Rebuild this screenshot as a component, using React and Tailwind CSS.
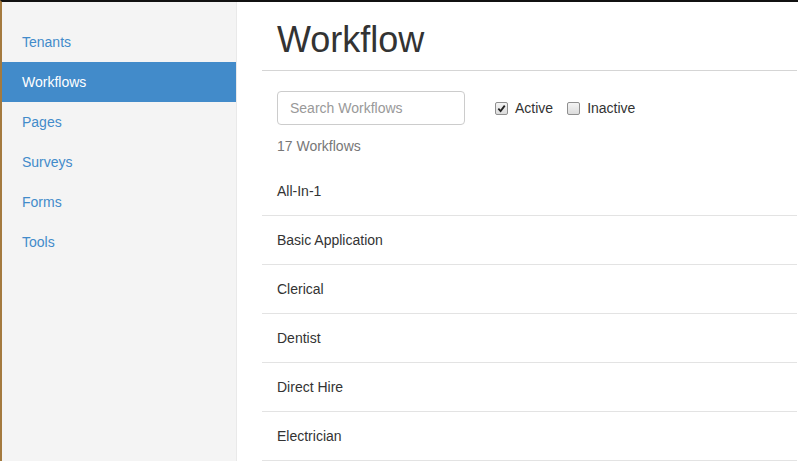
import { useState } from "react";

const navItems = ["Tenants", "Workflows", "Pages", "Surveys", "Forms", "Tools"];

const workflows = [
  "All-In-1",
  "Basic Application",
  "Clerical",
  "Dentist",
  "Direct Hire",
  "Electrician",
];

function Check({ checked, label }) {
  return (
    <label className="flex items-center gap-[7px] text-[14px] text-[#333]">
      <span className="flex h-[13px] w-[13px] items-center justify-center rounded-[2px] border border-[#8f8f8f] bg-gradient-to-b from-[#f4f4f4] to-[#dcdcdc]">
        {checked && (
          <svg viewBox="0 0 10 10" className="h-[9px] w-[9px]">
            <path d="M1.5 5.2 L4 7.8 L8.6 1.8" fill="none" stroke="#222" strokeWidth="2" />
          </svg>
        )}
      </span>
      {label}
    </label>
  );
}

export default function App() {
  const [active] = useState("Workflows");

  return (
    <div className="flex h-[461px] w-[798px] overflow-hidden border-l-2 border-t-2 border-l-[#a47a3e] border-t-[#111] bg-white font-['Liberation_Sans',Arial,sans-serif] text-[14px]">
      <aside className="w-[235px] shrink-0 border-r border-[#e9e9e9] bg-[#f4f4f4] pt-5">
        {navItems.map((item) => (
          <div
            key={item}
            className={
              item === active
                ? "flex h-10 items-center bg-[#428bca] pl-5 text-white"
                : "flex h-10 items-center pl-5 text-[#428bca]"
            }
          >
            {item}
          </div>
        ))}
      </aside>

      <main className="ml-[25px] mr-px flex-1">
        <div className="border-b border-[#d5d5d5] pb-[10px] pl-[15px] pt-[18px]">
          <h1 className="flex h-10 items-center text-[36px] font-medium leading-none text-[#333]">Workflow</h1>
        </div>

        <div className="mt-[20px] flex items-center gap-[30px] px-[15px]">
          <input
            placeholder="Search Workflows"
            className="h-[34px] w-[188px] rounded border border-[#ccc] px-3 text-[14px] text-[#555] placeholder:text-[#999] outline-none"
          />
          <div className="flex items-center gap-[14px]">
            <Check checked label="Active" />
            <Check label="Inactive" />
          </div>
        </div>

        <div className="mt-[11px] px-[15px] leading-5 text-[#777]">17 Workflows</div>

        <ul className="mt-[11px]">
          {workflows.map((w) => (
            <li key={w} className="flex h-[49px] items-center border-b border-[#e3e3e3] pl-[15px] text-[#333]">
              {w}
            </li>
          ))}
        </ul>
      </main>
    </div>
  );
}
